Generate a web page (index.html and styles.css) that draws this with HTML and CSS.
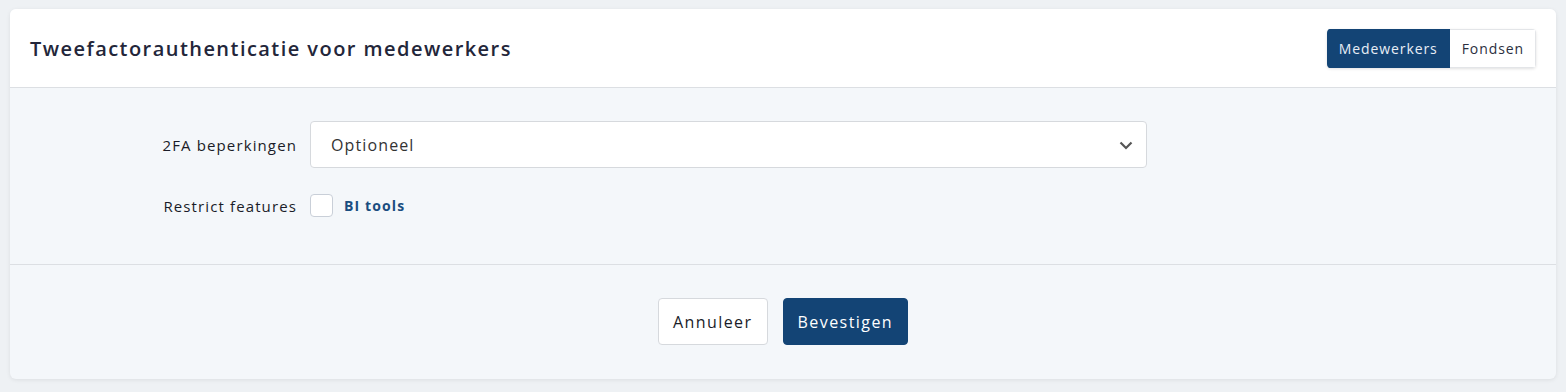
FILE: index.html
```html
<!DOCTYPE html>
<html lang="nl">
<head>
    <meta charset="UTF-8">
    <title>Tweefactorauthenticatie</title>
    <link rel="stylesheet" href="styles.css">
</head>
<body>
    <div class="card">
        <div class="card-header">
            <h2>Tweefactorauthenticatie voor medewerkers</h2>
            <div class="toggle">
                <button class="toggle-btn active">Medewerkers</button>
                <button class="toggle-btn">Fondsen</button>
            </div>
        </div>

        <div class="card-body">
            <div class="form-row">
                <label class="form-label" for="restriction">2FA beperkingen</label>
                <div class="select-wrap">
                    <select id="restriction">
                        <option>Optioneel</option>
                        <option>Verplicht</option>
                    </select>
                    <svg class="chevron" width="14" height="9" viewBox="0 0 14 9"><path d="M1.5 1.5 L7 7 L12.5 1.5" fill="none" stroke="#555" stroke-width="2.2"/></svg>
                </div>
            </div>
            <div class="form-row">
                <span class="form-label">Restrict features</span>
                <label class="check">
                    <input type="checkbox">
                    <span class="box"></span>
                    <span class="check-text">BI tools</span>
                </label>
            </div>
        </div>

        <div class="card-footer">
            <button class="btn btn-light">Annuleer</button>
            <button class="btn btn-primary">Bevestigen</button>
        </div>
    </div>
</body>
</html>
```

FILE: styles.css
```css
body {
    margin: 0;
    padding: 9px 10px 13px;
    background-color: #eef1f4;
    font-family: "Open Sans", sans-serif;
    letter-spacing: 0.07em;
    color: #1a1c28;
}
.card {
    background-color: #f4f7fa;
    border-radius: 6px;
    box-shadow: 0 1px 4px rgba(0,0,0,0.08);
    overflow: hidden;
}
.card-header {
    display: flex;
    align-items: center;
    justify-content: space-between;
    height: 78px;
    padding: 0 20px 0 20px;
    background-color: #fff;
    border-bottom: 1px solid #dcdfe3;
}
.card-header h2 {
    margin: 0;
    font-size: 20px;
    font-weight: 600;
    letter-spacing: 1.45px;
    color: #23263a;
}
.toggle {
    display: flex;
    border-radius: 4px;
    box-shadow: 0 1px 3px rgba(0,0,0,0.12);
    overflow: hidden;
}
.toggle-btn {
    height: 39px;
    padding: 0 11px 0 12px;
    border: 1px solid #e3e5e8;
    border-left: none;
    background-color: #fff;
    font-family: inherit;
    font-size: 14px;
    letter-spacing: 0.065em;
    color: #2c2f40;
}
.toggle-btn.active {
    background-color: #134475;
    border-color: #134475;
    color: #e8eef5;
}
.card-body {
    padding: 33px 0 33px;
    border-bottom: 1px solid #dcdfe3;
    height: 110px;
}
.form-row {
    display: flex;
    align-items: center;
    gap: 13px;
    min-height: 47px;
    margin-bottom: 14px;
}
.form-label {
    width: 287px;
    text-align: right;
    font-size: 15px;
    color: #1a1c28;
}
.select-wrap {
    position: relative;
    width: 837px;
}
.select-wrap select {
    width: 100%;
    height: 47px;
    padding: 0 20px;
    border: 1px solid #d6d9dd;
    border-radius: 4px;
    background-color: #fff;
    font-family: inherit;
    font-size: 16px;
    letter-spacing: 0.07em;
    color: #333;
    appearance: none;
}
.chevron {
    position: absolute;
    right: 14px;
    top: 20px;
    pointer-events: none;
}
.check {
    display: flex;
    align-items: center;
    gap: 11px;
}
.check input {
    display: none;
}
.check .box {
    width: 21px;
    height: 21px;
    border: 1px solid #c9cfd8;
    border-radius: 4px;
    background-color: #fff;
}
.check-text {
    font-size: 14px;
    font-weight: 700;
    letter-spacing: 0.08em;
    color: #1a4d80;
}
.card-footer {
    display: flex;
    justify-content: center;
    gap: 15px;
    padding: 33px 0 34px;
}
.btn {
    height: 47px;
    padding: 0 14px;
    border-radius: 4px;
    font-family: inherit;
    font-size: 16px;
    letter-spacing: 0.09em;
}
.btn-light {
    background-color: #fff;
    border: 1px solid #d6d9dd;
    color: #1a1c28;
}
.btn-primary {
    background-color: #134475;
    border: 1px solid #134475;
    color: #fff;
}
```
